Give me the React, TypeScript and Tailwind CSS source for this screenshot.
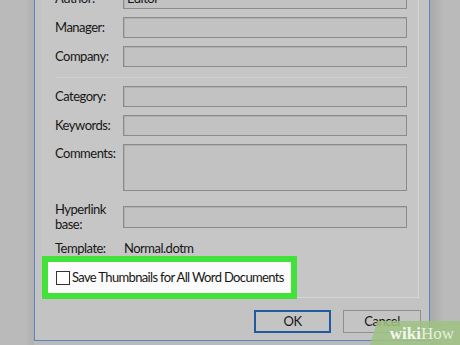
export default function App() {
  const font = { fontFamily: 'Lato, "Liberation Sans", sans-serif' };
  return (
    <div
      className="relative w-[460px] h-[345px] overflow-hidden bg-[#bababa] text-[13px] tracking-[-0.5px] text-[#161616]"
      style={font}
    >
      <div className="absolute inset-y-0 left-[24px] w-[10px] bg-gradient-to-r from-[#bababa] to-[#b0b0b0]" />
      <div className="absolute inset-y-0 left-[430px] w-[14px] bg-gradient-to-r from-[#a9a9a9] to-[#bababa]" />

      <div className="relative ml-[34px] w-[396px] h-[341px] bg-[#c3c3c3] border-x border-b border-[#5a86c0] flex flex-col">
        {/* tab page */}
        <div className="ml-[6px] w-[378px] h-[298px] bg-[#c6c6c6] border-r border-b border-[#d6d6d6] flex flex-col pl-[14px] pr-[11px]">
          <div className="-mt-[12px] flex flex-col gap-[8px]">
            <Row label="Author:" value="Editor" />
            <Row label="Manager:" />
            <Row label="Company:" />
          </div>
          <div className="mt-[10px] h-px bg-[#b6b6b6] border-b border-[#d0d0d0] w-full" />
          <div className="mt-[8px] flex flex-col gap-[8px]">
            <Row label="Category:" />
            <Row label="Keywords:" />
            <div className="flex items-start">
              <div className="w-[68px] leading-[16px] pt-[1px] whitespace-nowrap">Comments:</div>
              <div className="flex-1 h-[47px] border border-[#8b8b8b] bg-[#c2c2c2] shadow-[inset_1px_1px_0_#b0b0b0]" />
            </div>
            <div className="flex items-center mt-[3px]">
              <div className="w-[68px] leading-[15px]">
                Hyperlink
                <br />
                base:
              </div>
              <div className="flex-1 h-[22px] border border-[#8b8b8b] bg-[#c2c2c2] shadow-[inset_1px_1px_0_#b0b0b0]" />
            </div>
          </div>
          <div className="flex items-center mt-[7px] h-[20px]">
            <div className="w-[69px]">Template:</div>
            <div>Normal.dotm</div>
          </div>
        </div>

        {/* highlighted checkbox */}
        <div className="absolute left-[7px] top-[256px] w-[255px] h-[43px] border-[6px] border-[#42e23a] bg-[#fbfbfb] flex items-center pl-[8px]">
          <div className="w-[14px] h-[14px] border border-[#333] bg-white shrink-0" />
          <span className="ml-[2px] whitespace-nowrap tracking-[-0.65px]">Save Thumbnails for All Word Documents</span>
        </div>

        <div className="flex justify-end gap-[12px] mt-[12px] pr-[8px]">
          <button className="w-[77px] h-[23px] border-2 border-[#1f5b9e] bg-[#c4c4c4] flex items-center justify-center">
            OK
          </button>
          <button className="w-[78px] h-[23px] border border-[#8f8f8f] bg-[#c4c4c4] flex items-center justify-center">
            Cancel
          </button>
        </div>
      </div>

      {/* watermark */}
      <div
        className="absolute left-[370px] top-[321px] w-[90px] h-[24px] bg-[#9fc383]/85 flex items-center justify-end pr-[6px]"
        style={{ clipPath: "polygon(8% 0, 100% 0, 100% 100%, 0 100%)" }}
      >
        <span
          className="text-[17px] font-bold tracking-normal text-[#f2f6ee] leading-none"
          style={{ fontFamily: '"Liberation Serif", serif' }}
        >
          wiki<span className="font-normal text-[#e5efdd]">How</span>
        </span>
      </div>
    </div>
  );
}

function Row({ label, value }: { label: string; value?: string }) {
  return (
    <div className="flex items-center">
      <div className="w-[68px] whitespace-nowrap">{label}</div>
      <div className="flex-1 h-[21px] border border-[#8b8b8b] bg-[#c2c2c2] shadow-[inset_1px_1px_0_#b0b0b0] flex items-center pl-[3px]">
        {value}
      </div>
    </div>
  );
}
